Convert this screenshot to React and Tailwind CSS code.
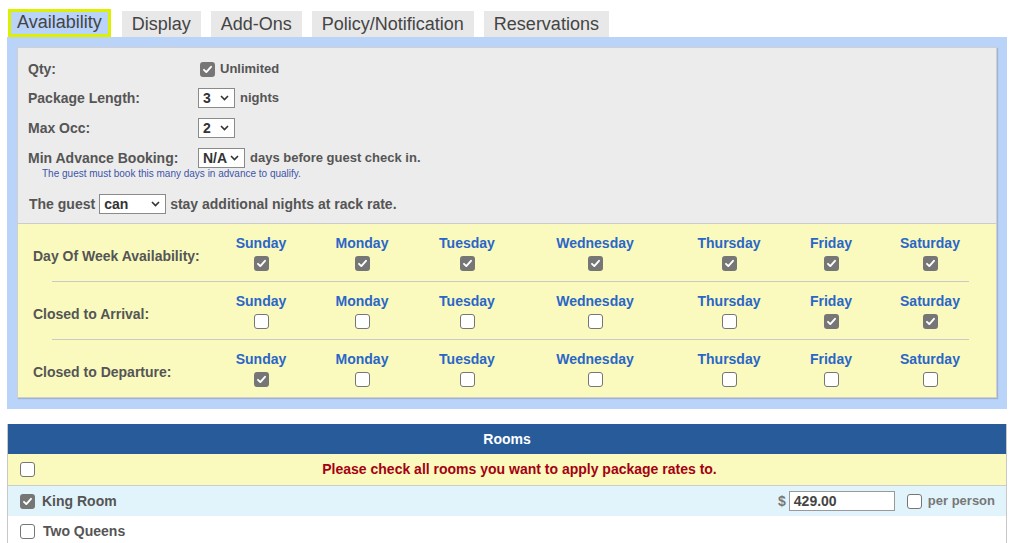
import React from "react";

function Check({ checked }) {
  return checked ? (
    <span className="inline-flex w-[15px] h-[15px] rounded-[3px] bg-[#767676] items-center justify-center shrink-0">
      <svg width="11" height="11" viewBox="0 0 11 11">
        <path d="M2 5.8 L4.3 8.1 L9 2.8" stroke="white" strokeWidth="1.9" fill="none" strokeLinecap="round" strokeLinejoin="round" />
      </svg>
    </span>
  ) : (
    <span className="inline-block w-[15px] h-[15px] rounded-[3px] border border-[#767676] bg-white shrink-0" />
  );
}

function Sel({ value, w }) {
  return (
    <span className={`inline-flex items-center justify-between h-[20px] border border-[#8a8a8a] bg-white pl-[4px] pr-[5px] text-[14px] font-bold text-[#333] ${w}`}>
      <span>{value}</span>
      <svg width="9" height="6" viewBox="0 0 9 6">
        <path d="M1 1 L4.5 4.5 L8 1" stroke="#333" strokeWidth="1.6" fill="none" />
      </svg>
    </span>
  );
}

const days = ["Sunday", "Monday", "Tuesday", "Wednesday", "Thursday", "Friday", "Saturday"];
const dayRows = [
  { label: "Day Of Week Availability:", checks: [1, 1, 1, 1, 1, 1, 1] },
  { label: "Closed to Arrival:", checks: [0, 0, 0, 0, 0, 1, 1] },
  { label: "Closed to Departure:", checks: [1, 0, 0, 0, 0, 0, 0] },
];

export default function App() {
  return (
    <div className="w-[1015px] h-[543px] overflow-hidden bg-white font-['Liberation_Sans',Arial,sans-serif] pt-[9px]">
      {/* Tabs */}
      <div className="flex items-end gap-[10px] pl-[8px] h-[28px]">
        <div className="h-[28px] bg-[#bad3f8] border-[3px] border-[#dcf000] px-[6px] text-[18px] leading-[21px] text-[#444] mr-[1px]">
          Availability
        </div>
        {["Display", "Add-Ons", "Policy/Notification", "Reservations"].map((t) => (
          <div key={t} className="h-[26px] bg-[#e8e8e8] px-[10px] text-[18px] leading-[26px] text-[#444]">
            {t}
          </div>
        ))}
      </div>

      {/* Panel */}
      <div className="ml-[7px] w-[1000px] bg-[#bad3f8] pt-[10px] px-[10px] pb-[11px]">
        <div className="border border-[#cfcfcf] shadow-[1px_1px_1px_rgba(0,0,0,0.15)]">
          {/* Gray form */}
          <div className="bg-[#ececec] border-b border-[#cccccc] pt-[11px] pb-[9px] pl-[10px] text-[14px] font-bold text-[#555]">
            <div className="flex items-center h-[20px]">
              <span className="w-[170px]">Qty:</span>
              <span className="ml-[2px] flex items-center gap-[5px]">
                <Check checked />
                <span className="text-[13px]">Unlimited</span>
              </span>
            </div>
            <div className="flex items-center h-[20px] mt-[9px]">
              <span className="w-[170px]">Package Length:</span>
              <Sel value="3" w="w-[37px]" />
              <span className="ml-[5px] text-[13px]">nights</span>
            </div>
            <div className="flex items-center h-[20px] mt-[10px]">
              <span className="w-[170px]">Max Occ:</span>
              <Sel value="2" w="w-[37px]" />
            </div>
            <div className="flex items-center h-[20px] mt-[10px]">
              <span className="w-[170px]">Min Advance Booking:</span>
              <Sel value="N/A" w="w-[47px]" />
              <span className="ml-[5px] text-[13px]">days before guest check in.</span>
            </div>
            <div className="pl-[14px] text-[10px] leading-[12px] font-normal text-[#3d55a8]">
              The guest must book this many days in advance to qualify.
            </div>
            <div className="flex items-center h-[20px] mt-[14px] pl-[1px]">
              <span className="mr-[4px]">The guest</span>
              <Sel value="can" w="w-[67px]" />
              <span className="ml-[4px]">stay additional nights at rack rate.</span>
            </div>
          </div>

          {/* Yellow days */}
          <div className="bg-[#fafabe]">
            {dayRows.map((r, ri) => (
              <React.Fragment key={r.label}>
                {ri > 0 && <div className="h-px bg-[#c9c9c9] ml-[34px] w-[917px]" />}
                <div className="grid grid-cols-[193px_100px_102px_108px_148px_120px_84px_114px] pt-[11px] pb-[10px]">
                  <div className="self-center pl-[15px] pt-[7px] text-[14px] font-bold text-[#555]">{r.label}</div>
                  {days.map((d, i) => (
                    <div key={d} className="flex flex-col items-center">
                      <span className="text-[14px] leading-[16px] font-bold text-[#2a66c8]">{d}</span>
                      <span className="mt-[5px] flex">
                        <Check checked={!!r.checks[i]} />
                      </span>
                    </div>
                  ))}
                </div>
              </React.Fragment>
            ))}
          </div>
        </div>
      </div>

      {/* Rooms */}
      <div className="ml-[7px] w-[1000px] mt-[15px] border-x border-[#c8c8c8]">
        <div className="h-[30px] bg-[#285b9a] flex items-center justify-center text-white text-[14px] font-bold">
          Rooms
        </div>
        <div className="h-[32px] bg-[#fafabe] border-b border-[#cccccc] flex items-center pl-[12px]">
          <Check checked={false} />
          <div className="flex-1 text-center text-[14px] font-bold text-[#a50013] pr-[2px]">
            Please check all rooms you want to apply package rates to.
          </div>
        </div>
        <div className="h-[30px] bg-[#e2f4fb] flex items-center pl-[12px] pr-[11px] text-[14px] font-bold text-[#555]">
          <Check checked />
          <span className="ml-[7px]">King Room</span>
          <span className="ml-auto text-[#777]">$</span>
          <span className="ml-[3px] w-[106px] h-[20px] border border-[#999] bg-white pl-[4px] flex items-center text-[#444]">
            429.00
          </span>
          <span className="ml-[12px] flex">
            <Check checked={false} />
          </span>
          <span className="ml-[6px] text-[13px] text-[#777]">per person</span>
        </div>
        <div className="h-[30px] bg-white flex items-center pl-[12px] text-[14px] font-bold text-[#555]">
          <Check checked={false} />
          <span className="ml-[8px]">Two Queens</span>
        </div>
      </div>
    </div>
  );
}
